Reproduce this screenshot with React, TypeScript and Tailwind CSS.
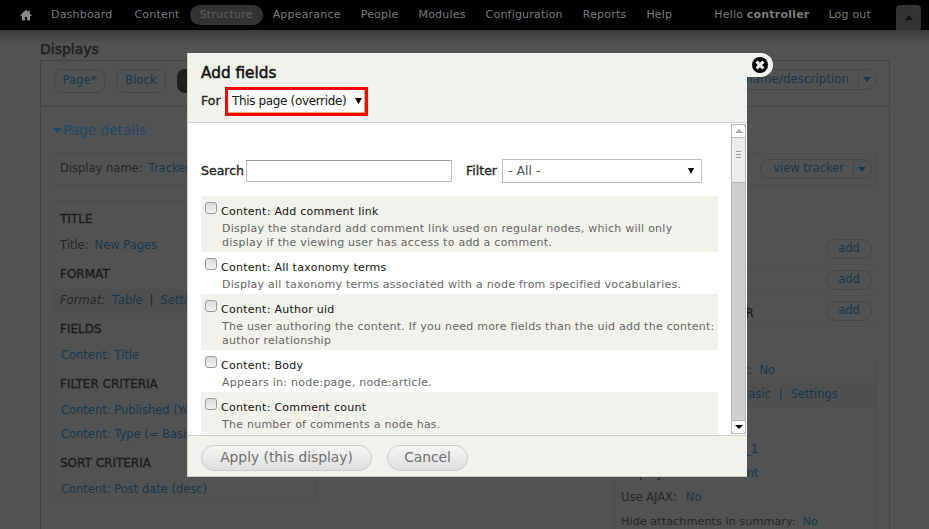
import React from "react";

const font = { fontFamily: '"DejaVu Sans", sans-serif' };

const nav = ["Dashboard", "Content", "Structure", "Appearance", "People", "Modules", "Configuration", "Reports", "Help"];

const fields = [
  { t: "Content: Add comment link", d: ["Display the standard add comment link used on regular nodes, which will only", "display if the viewing user has access to add a comment."], alt: true },
  { t: "Content: All taxonomy terms", d: ["Display all taxonomy terms associated with a node from specified vocabularies."], alt: false },
  { t: "Content: Author uid", d: ["The user authoring the content. If you need more fields than the uid add the content:", "author relationship"], alt: true },
  { t: "Content: Body", d: ["Appears in: node:page, node:article."], alt: false },
  { t: "Content: Comment count", d: ["The number of comments a node has."], alt: true },
];

function Caret({ className }: { className: string }) {
  return (
    <svg viewBox="0 0 10 6" className={className} preserveAspectRatio="none">
      <path d="M0 0h10L5 6z" fill="currentColor" />
    </svg>
  );
}

function LeftSection({ title, links }: { title: string; links: string[] }) {
  return (
    <div>
      <div className="pl-[6px] h-[31px] flex items-center text-[12px] text-[#1c1c1c] [-webkit-text-stroke:0.35px_#1c1c1c]">{title}</div>
      {links.map((l) => (
        <div key={l} className="pl-[7px] h-[24px] flex items-center text-[#1a374b] whitespace-nowrap">{l}</div>
      ))}
    </div>
  );
}

function AddRow({ label }: { label?: string }) {
  return (
    <div className="h-[31px] flex items-center justify-between pl-[100px] pr-[5px] border-b border-[#4e4e4e]">
      <span className="text-[12px] text-[#1c1c1c] pt-[3px] [-webkit-text-stroke:0.35px_#1c1c1c]">{label}</span>
      <div className="h-[20px] w-[46px] rounded-full border border-[#464646] flex items-center justify-center text-[#1a374b]">add</div>
    </div>
  );
}

export default function App() {
  return (
    <div className="relative w-[929px] h-[529px] overflow-hidden bg-[#525252] text-[11.5px]" style={font}>
      {/* Toolbar */}
      <div className="h-[30px] bg-black flex items-center pl-[20px] pr-[8px] text-[#7d7d7d] text-[11px] tracking-[0.2px] relative whitespace-nowrap">
        <svg viewBox="0 0 12 12" className="w-[12px] h-[12px] shrink-0 mr-[9px] text-[#8a8a8a]">
          <path d="M6 .8 0 6.4l.9.9L2 6.3V11.4h3V8h2v3.4h3V6.3l1.1 1 .9-.9L9.8 4.4V1.4H8.3v1.6z" fill="currentColor" />
        </svg>
        {nav.map((n) => (
          <div
            key={n}
            className={
              n === "Structure"
                ? "h-[20px] flex items-center px-[10px] rounded-full bg-[#333333] text-[#5e5e5e]"
                : n === "Dashboard"
                  ? "h-[20px] flex items-center pl-[10px] pr-[12px]"
                  : "h-[20px] flex items-center px-[10px]"
            }
          >
            {n}
          </div>
        ))}
        <div className="ml-auto">
          Hello <span className="font-bold">controller</span>
        </div>
        <div className="ml-[19px]">Log out</div>
        <div className="ml-[25px] self-end w-[25px] h-[25px] shrink-0 bg-[#333333] rounded-t-[4px] flex items-center justify-center text-[#111]">
          <Caret className="w-[8px] h-[5px] rotate-180" />
        </div>
      </div>
      <div className="h-[14px] bg-gradient-to-b from-[#3c3c3c] to-[#525252] absolute top-[30px] left-0 right-0" />

      {/* Page behind overlay */}
      <div className="pl-[40px] pr-[39px] relative">
        <h1 className="h-[30px] pt-[10px] text-[14px] leading-[19px] text-[#1e1e1e] [-webkit-text-stroke:0.45px_#1e1e1e]">Displays</h1>
        <div className="border border-b-0 border-[#444444] h-[470px]">
          <div className="h-[46px] border-b border-[#444444] flex items-start pt-[8px] pl-[13px] pr-[12px] gap-[11px] text-[11.5px] tracking-[0.1px] text-[#1a374b]">
            <div className="h-[24px] w-[51px] flex items-center justify-center rounded-[8px] border border-[#464646]">Page*</div>
            <div className="h-[24px] w-[50px] flex items-center justify-center rounded-[8px] border border-[#464646]">Block</div>
            <div className="h-[24px] w-[40px] rounded-[8px] bg-[#1f1f1f]" />
            <div className="ml-auto h-[21px] pl-[8px] pr-[5px] flex items-center rounded-full border border-[#464646] text-[11.7px]">
              name/description
              <span className="ml-[9px] pl-[4px] border-l border-[#464646] h-[15px] flex items-center">
                <Caret className="w-[8px] h-[5px]" />
              </span>
            </div>
          </div>
          <div className="pl-[12px] pr-[12px]">
            <div className="h-[46px] flex items-center text-[#1d4a66] text-[13.7px]">
              <Caret className="w-[9px] h-[5px] mr-[1px]" />
              Page details
            </div>
            <div className="h-[32px] border border-[#4c4c4c] flex items-center pl-[6px] pr-[4px] text-[#262626]">
              <span>Display name:</span>
              <span className="ml-[6px] text-[#1a374b]">Tracker</span>
              <div className="ml-auto h-[20px] pl-[12px] pr-[5px] flex items-center rounded-full border border-[#464646] text-[#1a374b]">
                view tracker
                <span className="ml-[9px] pl-[4px] border-l border-[#464646] h-[15px] flex items-center">
                  <Caret className="w-[8px] h-[5px]" />
                </span>
              </div>
            </div>
            <div className="flex justify-between mt-[16px]">
              <div className="w-[263px] h-[300px] border border-[#4c4c4c] pt-[1px]">
                <LeftSection title="TITLE" links={[]} />
                <div className="pl-[6px] h-[24px] flex items-center text-[#262626]">Title:<span className="ml-[6px] text-[#1a374b]">New Pages</span></div>
                <div className="pl-[6px] h-[31px] flex items-center text-[12px] text-[#1c1c1c] [-webkit-text-stroke:0.35px_#1c1c1c]">FORMAT</div>
                <div className="pl-[6px] h-[24px] flex items-center italic bg-[#4f4f4f] text-[#262626]">Format:<span className="ml-[7px] text-[#1a374b]">Table</span><span className="mx-[7px]">|</span><span className="text-[#1a374b]">Settings</span></div>
                <LeftSection title="FIELDS" links={["Content: Title"]} />
                <LeftSection title="FILTER CRITERIA" links={["Content: Published (Yes)", "Content: Type (= Basic page)"]} />
                <LeftSection title="SORT CRITERIA" links={["Content: Post date (desc)"]} />
              </div>
              <div className="w-[263px] text-[#262626] pt-[33px]">
                <AddRow />
                <AddRow />
                <AddRow label="PAGER" />
                <div className="pl-[6px] flex flex-col mt-[32px] border border-y-0 border-[#4c4c4c]">
                  <div className="h-[24px] flex items-center whitespace-nowrap">Exposed form in block:<span className="ml-[7px] text-[#1a374b]">No</span></div>
                  <div className="h-[24px] -ml-[6px] pl-[6px] bg-[#4f4f4f] flex items-center whitespace-nowrap">Exposed form style:<span className="ml-[5px] text-[#1a374b]">Basic</span><span className="mx-[8px] text-[#1a374b]">|</span><span className="text-[#1a374b]">Settings</span></div>
                  <div className="h-[24px] mt-[31px] flex items-center whitespace-nowrap">Machine Name:<span className="ml-[6px] text-[#1a374b]">page_1</span></div>
                  <div className="h-[24px] flex items-center whitespace-nowrap">Display name:<span className="ml-[9px] text-[#1a374b]">Content</span></div>
                  <div className="h-[24px] flex items-center whitespace-nowrap">Use AJAX:<span className="ml-[9px] text-[#1a374b]">No</span></div>
                  <div className="h-[24px] flex items-center whitespace-nowrap text-[11.3px]">Hide attachments in summary:<span className="ml-[7px] text-[#1a374b]">No</span></div>
                </div>
              </div>
            </div>
          </div>
        </div>
      </div>

      {/* Close tab */}
      <div className="absolute left-[740px] top-[53px] w-[33px] h-[24px] bg-[#f2f2ec] rounded-r-[12px] flex items-center justify-end pr-[5px]">
        <svg viewBox="0 0 16 16" className="w-[16px] h-[16px]">
          <circle cx="8" cy="8" r="8" fill="#000" />
          <path d="M4.6 4.6l6.8 6.8M11.4 4.6l-6.8 6.8" stroke="#fff" strokeWidth="3" />
        </svg>
      </div>

      {/* Modal */}
      <div className="absolute left-[187px] top-[53px] w-[560px] h-[424px] flex flex-col bg-white border-l border-b border-[#cfcfcf]">
        <div className="h-[70px] shrink-0 bg-[#f2f2ec] border-b border-[#cfcfcf] pl-[13px]">
          <div className="pt-[10px] h-[34px] text-[15.3px] leading-[20px] text-[#111] [-webkit-text-stroke:0.5px_#111]">Add fields</div>
          <div className="flex items-center">
            <span className="text-[12.5px] text-[#222] w-[24px] [-webkit-text-stroke:0.35px_#222]">For</span>
            <div className="w-[143px] h-[29px] border-[3px] border-[#ff0000] bg-white">
              <div className="h-full flex items-center pl-[4px] text-[12px] tracking-[-0.35px] text-[#111] whitespace-nowrap border-r border-b border-[#e2b070]">
                This page (override)
                <Caret className="w-[7px] h-[6px] ml-[9px] text-black" />
              </div>
            </div>
          </div>
        </div>
        <div className="h-[312px] flex shrink-0 overflow-hidden">
          <div className="flex-1 pl-[13px] overflow-hidden">
            <div className="flex items-center h-[24px] mt-[36px] mb-[13px]">
              <span className="text-[12.5px] pt-[1px] text-[#222] w-[45px] [-webkit-text-stroke:0.35px_#222]">Search</span>
              <div className="w-[206px] h-[22px] border border-[#bdbdbd] border-t-[#999999] bg-white" />
              <span className="text-[12.5px] pt-[1px] text-[#222] ml-[14px] w-[36px] [-webkit-text-stroke:0.35px_#222]">Filter</span>
              <div className="w-[200px] h-[24px] border border-[#bdbdbd] bg-white flex items-center justify-between pl-[5px] pr-[7px] text-[#555] text-[12.5px]">
                <span className="pt-[1px]">- All -</span>
                <Caret className="w-[6px] h-[6px] text-black" />
              </div>
            </div>
            <div className="w-[517px]">
              {fields.map((f) => (
                <div key={f.t} className={"relative pl-[20px] pt-[8px] " + (f.alt ? "bg-[#f2f2ec]" : "bg-white")}>
                  <div className="absolute left-[4px] top-[6px] w-[12px] h-[12px] rounded-[3px] border border-[#9a9a9a] bg-gradient-to-b from-[#dcdcdc] to-[#f0f0f0]" />
                  <div className="text-[11px] tracking-[0.27px] leading-[15px] text-[#111] whitespace-nowrap">{f.t}</div>
                  <div className="pt-[3px] pb-[2px] text-[#666] text-[11px] tracking-[0.25px] leading-[14px] whitespace-nowrap pl-[1px]">
                    {f.d.map((l) => (
                      <div key={l}>{l}</div>
                    ))}
                  </div>
                </div>
              ))}
            </div>
          </div>
          <div className="w-[15px] mr-[1px] my-[1px] shrink-0 bg-[#cfcfcf] flex flex-col border-x border-[#b5b5b5]">
            <div className="h-[14px] bg-white rounded-t-[3px] border-b border-t border-[#b5b5b5] flex items-center justify-center text-[#a8a8a8]">
              <Caret className="w-[8px] h-[4px] rotate-180" />
            </div>
            <div className="h-[45px] bg-[#ececec] border-b border-[#b5b5b5] flex flex-col items-center justify-center gap-[2px] pb-[12px]">
              <div className="w-[5px] h-[1px] bg-[#999]" />
              <div className="w-[5px] h-[1px] bg-[#999]" />
              <div className="w-[5px] h-[1px] bg-[#999]" />
            </div>
            <div className="flex-1" />
            <div className="h-[14px] bg-white rounded-b-[3px] border-t border-b border-[#b5b5b5] flex items-center justify-center text-black">
              <Caret className="w-[8px] h-[4px]" />
            </div>
          </div>
        </div>
        <div className="flex-1 bg-[#f2f2ec] border-t border-[#cfcfcf] flex items-center pl-[13px] pt-[3px] gap-[15px]">
          <div className="w-[171px] h-[26px] rounded-full border border-[#cccccc] bg-gradient-to-b from-[#f6f6f6] to-[#dedede] flex items-center justify-center text-[13.8px] text-[#707070]">
            Apply (this display)
          </div>
          <div className="w-[81px] h-[26px] rounded-full border border-[#cccccc] bg-gradient-to-b from-[#f6f6f6] to-[#dedede] flex items-center justify-center text-[13.8px] text-[#707070]">
            Cancel
          </div>
        </div>
      </div>
    </div>
  );
}
